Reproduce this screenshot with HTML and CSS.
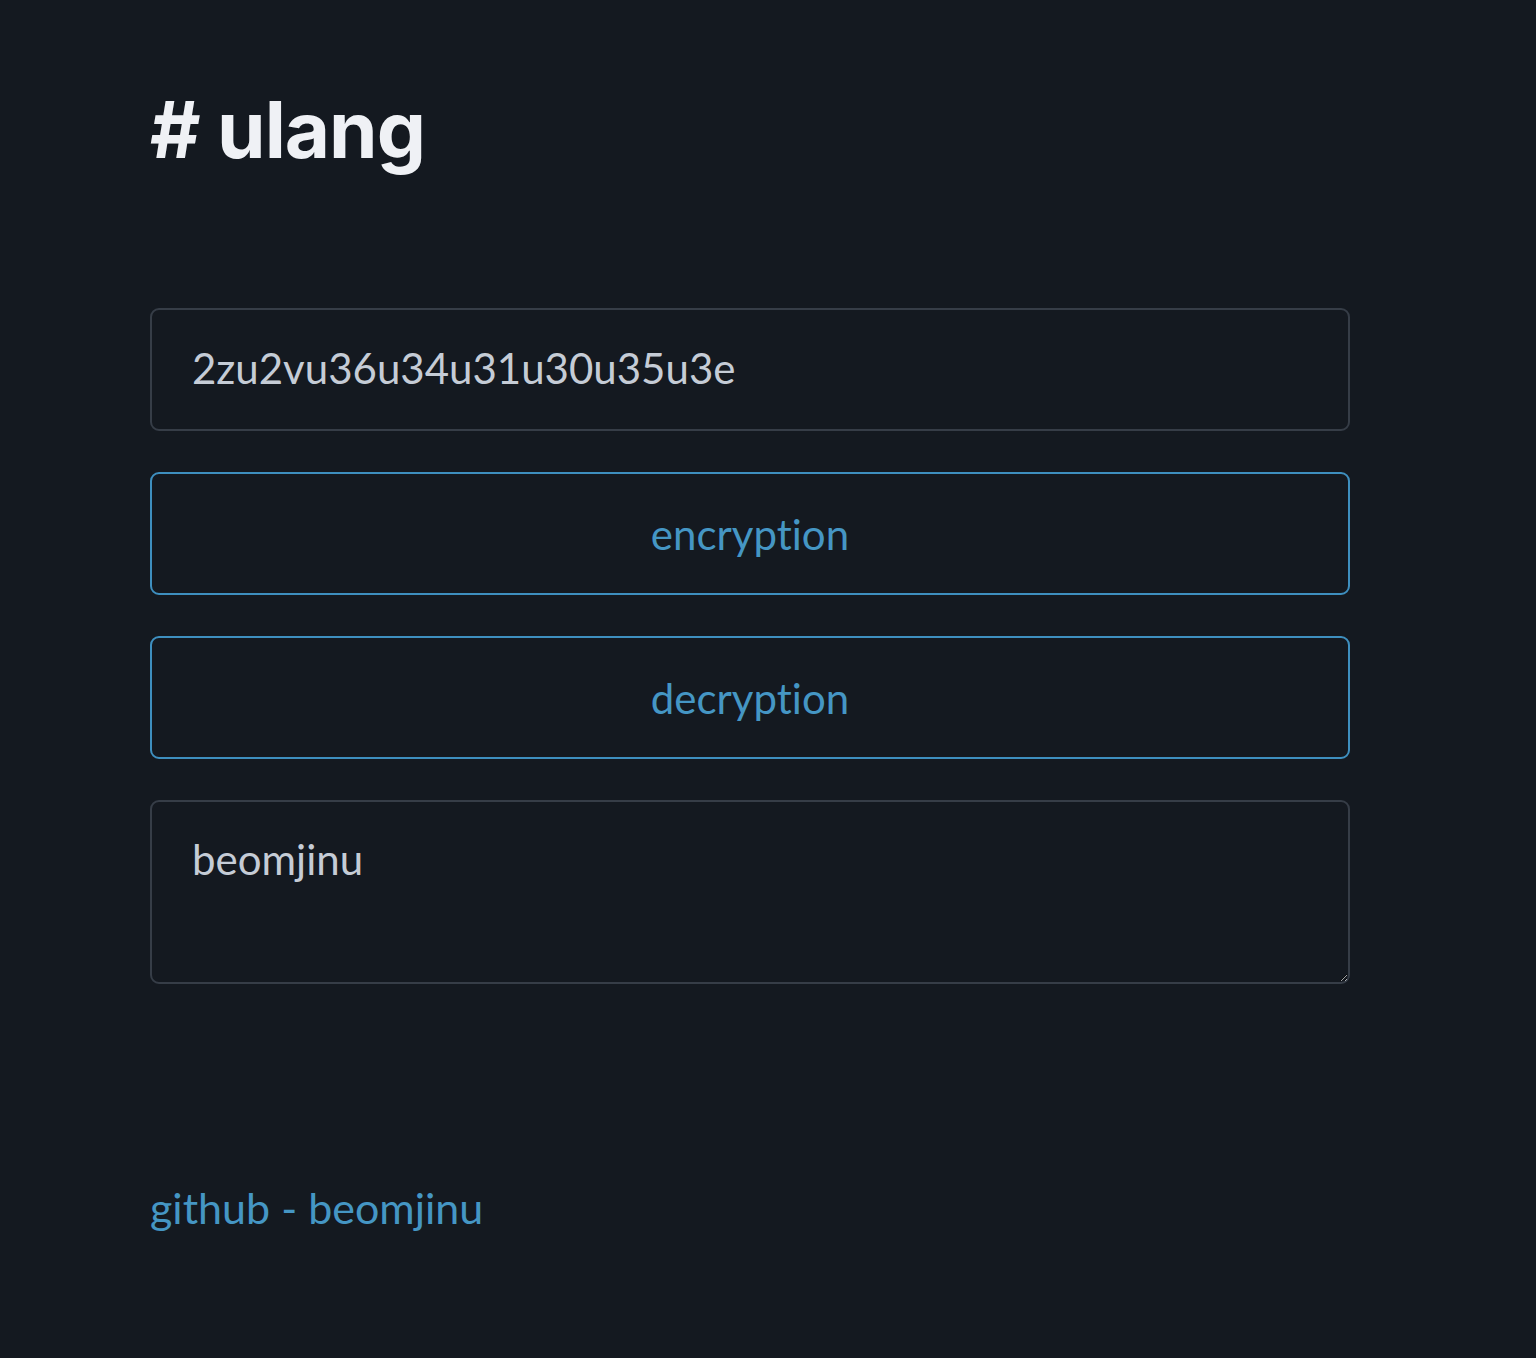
FILE: index.html
```html
<!DOCTYPE html>
<html lang="en">
<head>
<meta charset="utf-8">
<title>ulang</title>
<link rel="stylesheet" href="styles.css">
</head>
<body>
<main class="page">
  <h1 class="title"># ulang</h1>
  <form class="form">
    <input class="field" type="text" value="2zu2vu36u34u31u30u35u3e">
    <button class="btn" type="button">encryption</button>
    <button class="btn" type="button">decryption</button>
    <textarea class="field area">beomjinu</textarea>
  </form>
  <footer class="footer"><a class="link" href="#">github - beomjinu</a></footer>
</main>
</body>
</html>
```

FILE: styles.css
```css
html, body {
  margin: 0;
  padding: 0;
  background: #141920;
}
.page {
  width: 1200px;
  padding: 84px 0 0 150px;
  font-family: Lato, "Open Sans", sans-serif;
  font-variant-ligatures: none;
}
.title {
  margin: 0;
  font-family: Inter, "Liberation Sans", sans-serif;
  font-weight: 700;
  font-size: 78px;
  line-height: 92px;
  letter-spacing: -1px;
  color: #eff1f5;
}
.form {
  display: flex;
  flex-direction: column;
  gap: 41px;
  margin-top: 132px;
}
.field, .btn {
  box-sizing: border-box;
  width: 1200px;
  height: 123px;
  margin: 0;
  border-radius: 9px;
  background: #141920;
  font-family: Lato, "Open Sans", sans-serif;
  font-variant-ligatures: none;
  font-size: 42px;
  outline: none;
}
.field {
  border: 2px solid #363d47;
  color: #c5ccd6;
  padding: 0 40px 4px;
}
.area {
  height: 184px;
  padding: 28px 40px;
  line-height: 58px;
  resize: vertical;
}
.btn {
  border: 2px solid #3e8fbf;
  color: #4596c4;
  text-align: center;
  cursor: pointer;
}
.footer {
  margin-top: 198px;
}
.link {
  font-size: 43px;
  color: #4596c4;
  text-decoration: none;
}
```
